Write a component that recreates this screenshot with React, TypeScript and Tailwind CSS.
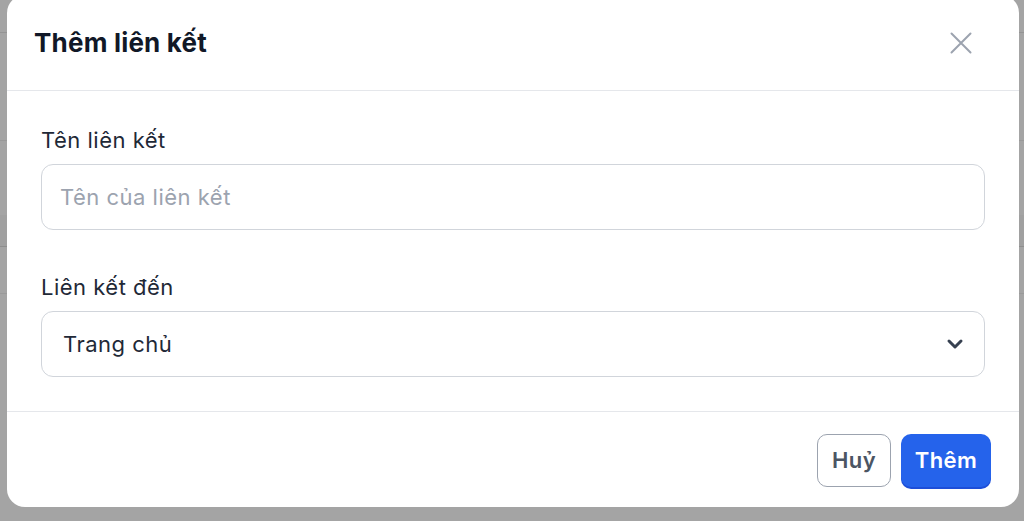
import { ChevronDown } from 'lucide-react'

function Backdrop() {
  return (
    <div className="flex h-full w-full flex-col bg-[#a4a4a4]">
      <div className="h-[33px] border-b border-[#949494]" />
      <div className="h-[108px] border-b border-[#999999]" />
      <div className="h-[75px] border-b border-[#a0a0a0]" />
      <div className="h-[31px] border-b border-[#8e8e8e] bg-[#a0a0a0]" />
      <div className="h-[47px] border-b border-[#9a9a9a]" />
      <div className="flex-1" />
    </div>
  )
}

export default function App() {
  return (
    <div className="relative h-[521px] w-full overflow-hidden font-['Inter','Noto_Sans',sans-serif]">
      <Backdrop />
      <div className="absolute left-[7px] top-[-5px] flex h-[512px] w-[1012px] flex-col rounded-[18px] bg-white">
        {/* header */}
        <div className="flex h-[96px] items-center justify-between border-b border-[#e5e7eb] pl-[27px] pr-[47px]">
          <h2 className="text-[26px] font-bold tracking-[0.2px] text-[#111827]">Thêm liên kết</h2>
          <button className="text-[#9ca3af]">
            <svg width="22" height="22" viewBox="0 0 22 22" fill="none" stroke="currentColor" strokeWidth="2" strokeLinecap="round">
              <path d="M1.5 1.5l19 19M20.5 1.5l-19 19" />
            </svg>
          </button>
        </div>

        {/* body */}
        <div className="flex flex-col border-b border-[#e5e7eb] px-[34px] pt-[35px] pb-[34px]">
          <label className="text-[22px] leading-[28px] tracking-[0.5px] text-[#1f2937]">Tên liên kết</label>
          <input
            placeholder="Tên của liên kết"
            className="mt-[10px] h-[66px] rounded-[12px] border-[1.5px] border-[#d1d5db] px-[18px] text-[22px] tracking-[0.5px] text-[#1f2937] outline-none placeholder:text-[#9ca3af]"
          />
          <label className="mt-[43px] text-[22px] leading-[28px] tracking-[0.5px] text-[#1f2937]">Liên kết đến</label>
          <div className="mt-[10px] flex h-[66px] items-center justify-between rounded-[12px] border-[1.5px] border-[#d1d5db] pl-[21px] pr-[17px]">
            <span className="text-[22px] tracking-[0.5px] text-[#1f2937]">Trang chủ</span>
            <ChevronDown size={24} strokeWidth={3} className="text-[#374151]" />
          </div>
        </div>

        {/* footer */}
        <div className="flex flex-1 items-start justify-end gap-[10px] pt-[22px] pr-[28px]">
          <button className="h-[53px] w-[74px] rounded-[10px] border-[1.5px] border-[#9ca3af] text-[22px] font-semibold tracking-[0.4px] text-[#4b5563]">
            Huỷ
          </button>
          <button className="h-[53px] w-[90px] rounded-[10px] bg-[#2563eb] text-[22px] font-semibold tracking-[0.4px] text-white shadow-[0_2px_0_#1d4ed8]">
            Thêm
          </button>
        </div>
      </div>
    </div>
  )
}
